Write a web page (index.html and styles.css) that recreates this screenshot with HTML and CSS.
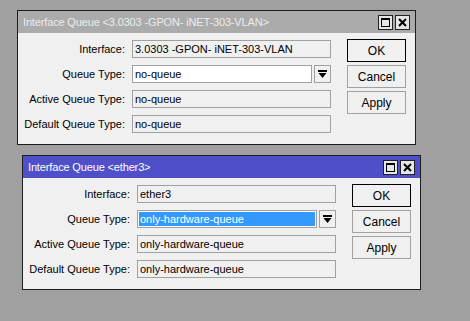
FILE: index.html
```html
<!DOCTYPE html>
<html lang="en">
<head>
    <meta charset="UTF-8">
    <title>Interface Queue</title>
    <link rel="stylesheet" href="styles.css">
</head>
<body>
    <div class="dialog dialog-inactive dialog-first">
        <div class="titlebar">
            <span class="title">Interface Queue &lt;3.0303 -GPON- iNET-303-VLAN&gt;</span>
            <div class="title-buttons">
                <span class="tbtn"><svg width="13" height="13" viewBox="0 0 13 13"><rect x="2.5" y="2.5" width="8" height="8" fill="none" stroke="#000"/><rect x="2" y="2" width="9" height="2" fill="#000"/></svg></span>
                <span class="tbtn"><svg width="13" height="13" viewBox="0 0 13 13"><path d="M3 3 L10 10 M10 3 L3 10" stroke="#000" stroke-width="2"/></svg></span>
            </div>
        </div>
        <div class="dialog-body">
            <div class="form">
                <label>Interface:</label>
                <div class="field">3.0303 -GPON- iNET-303-VLAN</div>
                <label>Queue Type:</label>
                <div class="combo">
                    <div class="field field-edit">no-queue</div>
                    <span class="drop"><svg width="9" height="9" viewBox="0 0 9 9"><rect x="0" y="0" width="9" height="2" fill="#000"/><path d="M0.5 3 H8.5 L4.5 8 Z" fill="#000"/></svg></span>
                </div>
                <label>Active Queue Type:</label>
                <div class="field">no-queue</div>
                <label>Default Queue Type:</label>
                <div class="field">no-queue</div>
            </div>
            <div class="buttons">
                <button class="btn btn-default">OK</button>
                <button class="btn">Cancel</button>
                <button class="btn">Apply</button>
            </div>
        </div>
    </div>

    <div class="dialog dialog-active dialog-second">
        <div class="titlebar">
            <span class="title">Interface Queue &lt;ether3&gt;</span>
            <div class="title-buttons">
                <span class="tbtn"><svg width="13" height="13" viewBox="0 0 13 13"><rect x="2.5" y="2.5" width="8" height="8" fill="none" stroke="#000"/><rect x="2" y="2" width="9" height="2" fill="#000"/></svg></span>
                <span class="tbtn"><svg width="13" height="13" viewBox="0 0 13 13"><path d="M3 3 L10 10 M10 3 L3 10" stroke="#000" stroke-width="2"/></svg></span>
            </div>
        </div>
        <div class="dialog-body">
            <div class="form">
                <label>Interface:</label>
                <div class="field">ether3</div>
                <label>Queue Type:</label>
                <div class="combo">
                    <div class="field field-edit field-selected"><span class="sel">only-hardware-queue</span></div>
                    <span class="drop"><svg width="9" height="9" viewBox="0 0 9 9"><rect x="0" y="0" width="9" height="2" fill="#000"/><path d="M0.5 3 H8.5 L4.5 8 Z" fill="#000"/></svg></span>
                </div>
                <label>Active Queue Type:</label>
                <div class="field">only-hardware-queue</div>
                <label>Default Queue Type:</label>
                <div class="field">only-hardware-queue</div>
            </div>
            <div class="buttons">
                <button class="btn btn-default">OK</button>
                <button class="btn">Cancel</button>
                <button class="btn">Apply</button>
            </div>
        </div>
    </div>
</body>
</html>
```

FILE: styles.css
```css
body {
    margin: 0;
    padding: 10px 0 0 0;
    background-color: #a0a0a0;
    font-family: "Liberation Sans", Arial, sans-serif;
    font-size: 11px;
    color: #000;
}
.dialog {
    box-sizing: border-box;
    width: 399px;
    height: 135px;
    border: 1px solid #1e1e1e;
    background-color: #f0f0f0;
}
.dialog-first {
    margin-left: 17px;
}
.dialog-second {
    margin-left: 22px;
    margin-top: 10px;
}
.titlebar {
    height: 22px;
    display: flex;
    align-items: center;
    justify-content: space-between;
    padding: 0 5px 0 5px;
}
.dialog-inactive .titlebar {
    background-color: #ababab;
    color: #ececec;
}
.dialog-active .titlebar {
    background-color: #4f50c9;
    color: #fff;
}
.title {
    font-size: 11px;
    letter-spacing: -0.15px;
}
.title-buttons {
    display: flex;
    gap: 2px;
}
.tbtn {
    box-sizing: border-box;
    width: 15px;
    height: 15px;
    border: 1px solid #222;
    background-color: #e6e6e6;
    display: flex;
    align-items: center;
    justify-content: center;
}
.dialog-body {
    display: flex;
    padding: 6px 9px 0 0;
}
.form {
    margin-top: 1px;
    display: grid;
    grid-template-columns: 107px 199px;
    grid-auto-rows: 18px;
    column-gap: 7px;
    row-gap: 7px;
}
.form label {
    text-align: right;
    line-height: 18px;
    white-space: nowrap;
}
.field {
    box-sizing: border-box;
    height: 18px;
    border: 1px solid #a0a0a0;
    padding: 0 2px;
    line-height: 16px;
    white-space: nowrap;
    overflow: hidden;
}
.field-edit {
    background-color: #fff;
    flex: 1;
}
.field-selected {
    padding: 1px;
    line-height: 14px;
}
.sel {
    display: block;
    background-color: #3399ff;
    color: #fff;
    padding: 0 1px;
    height: 14px;
}
.combo {
    display: flex;
    gap: 2px;
}
.drop {
    box-sizing: border-box;
    width: 17px;
    height: 18px;
    border: 1px solid #a0a0a0;
    display: flex;
    align-items: center;
    justify-content: center;
}
.buttons {
    margin-left: 16px;
    display: flex;
    flex-direction: column;
    gap: 3px;
}
.btn {
    box-sizing: border-box;
    width: 59px;
    height: 23px;
    padding: 0;
    border: 1px solid #a0a0a0;
    background-color: #f0f0f0;
    font-family: "Liberation Sans", Arial, sans-serif;
    font-size: 12px;
    color: #000;
}
.btn-default {
    border-color: #000;
}
```
